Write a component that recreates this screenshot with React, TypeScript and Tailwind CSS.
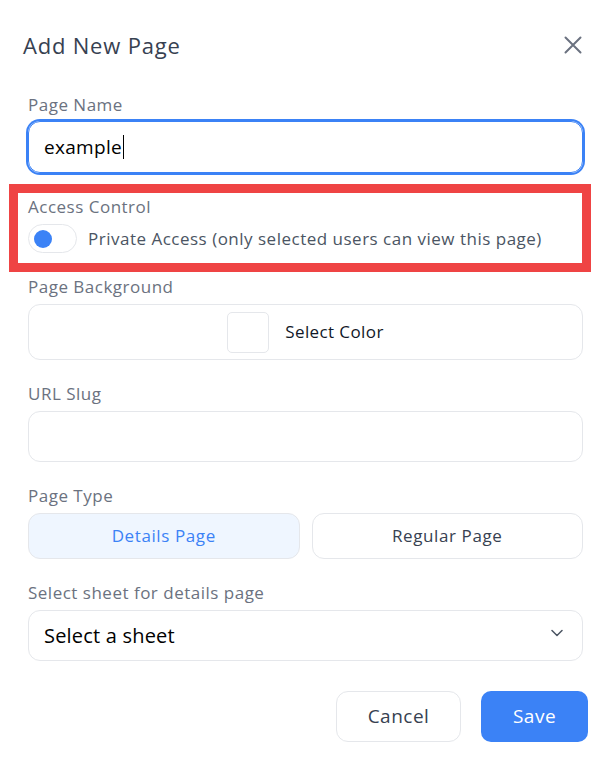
import React from "react";

const font = { fontFamily: '"Open Sans", "Noto Sans", sans-serif' };

function Label({ children }: { children: React.ReactNode }) {
  return <div className="text-[17px] leading-5 tracking-[0.5px] text-[#6b7280] mb-[7px]">{children}</div>;
}

export default function App() {
  return (
    <div className="w-[611px] h-[773px] bg-white" style={font}>
      <div className="flex items-center justify-between pl-[23px] pr-[29px] pt-[31px]">
        <h2 className="text-[22px] leading-7 tracking-[0.8px] text-[#374151] font-normal">Add New Page</h2>
        <svg width="18" height="18" viewBox="0 0 18 18" fill="none" stroke="#6b7280" strokeWidth="2" strokeLinecap="round">
          <path d="M1.5 1.5L16.5 16.5M16.5 1.5L1.5 16.5" />
        </svg>
      </div>

      <div className="px-7 pt-9 flex flex-col gap-6">
        <div>
          <div className="text-[17px] leading-5 tracking-[0.5px] text-[#6b7280] mb-[6px]">Page Name</div>
          <div className="h-[52px] rounded-xl border border-[#3b82f6] ring-2 ring-[#3b82f6] flex items-center pl-[15px]">
            <span className="text-[19px] tracking-[0.3px] text-black">example</span>
            <span className="w-px h-[24px] bg-black ml-px" />
          </div>
        </div>

        <div className="relative">
          <Label>Access Control</Label>
          <div className="flex items-center gap-[11px]">
            <div className="w-[49px] h-[29px] rounded-full border border-[#e5e7eb] bg-white flex items-center pl-[5px]">
              <div className="w-[18px] h-[18px] rounded-full bg-[#3b82f6]" />
            </div>
            <span className="text-[17px] tracking-[0.5px] text-[#4b5563]">Private Access (only selected users can view this page)</span>
          </div>
          <div className="pointer-events-none absolute -top-[13px] -bottom-[19px] -left-[19px] -right-[8px] border-[9px] border-[#ef4444]" />
        </div>

        <div>
          <Label>Page Background</Label>
          <div className="h-[56px] rounded-xl border border-[#e5e7eb] flex items-center justify-center gap-4">
            <div className="w-[42px] h-[41px] rounded-[5px] border border-[#e5e7eb] bg-white" />
            <span className="text-[17px] tracking-[0.4px] text-[#111827]">Select Color</span>
          </div>
        </div>

        <div>
          <Label>URL Slug</Label>
          <div className="h-[51px] rounded-xl border border-[#e5e7eb]" />
        </div>

        <div>
          <Label>Page Type</Label>
          <div className="grid grid-cols-2 gap-3">
            <div className="h-[46px] rounded-xl border border-[#e5e7eb] bg-[#eff6ff] flex items-center justify-center text-[17px] tracking-[0.6px] text-[#3b82f6]">
              Details Page
            </div>
            <div className="h-[46px] rounded-xl border border-[#e5e7eb] bg-white flex items-center justify-center text-[17px] tracking-[0.6px] text-[#374151]">
              Regular Page
            </div>
          </div>
        </div>

        <div>
          <Label>Select sheet for details page</Label>
          <div className="h-[51px] rounded-xl border border-[#e5e7eb] flex items-center justify-between pl-[15px] pr-[19px]">
            <span className="text-[20px] tracking-[0.2px] text-black">Select a sheet</span>
            <svg width="12" height="8" viewBox="0 0 12 8" fill="none" stroke="#4b5563" strokeWidth="1.5" strokeLinecap="round" strokeLinejoin="round" className="-mt-[6px]">
              <path d="M1 1.5L6 6.5L11 1.5" />
            </svg>
          </div>
        </div>

        <div className="flex justify-end gap-5 -mr-[5px] mt-[6px]">
          <button className="w-[125px] h-[51px] rounded-xl border border-[#e5e7eb] bg-white text-[19px] tracking-[0.5px] text-[#374151]">
            Cancel
          </button>
          <button className="w-[107px] h-[51px] rounded-[10px] bg-[#3b82f6] text-[19px] tracking-[0.5px] text-white">
            Save
          </button>
        </div>
      </div>
    </div>
  );
}
